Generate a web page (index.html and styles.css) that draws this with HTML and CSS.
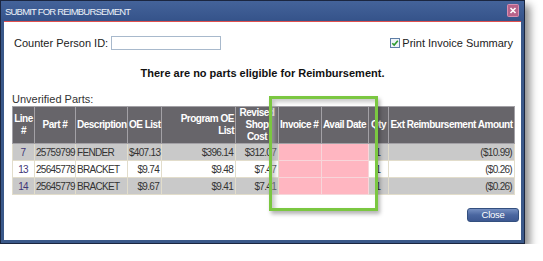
FILE: index.html
```html
<!DOCTYPE html>
<html lang="en">
<head>
  <meta charset="UTF-8" />
  <title>Submit for Reimbursement</title>
  <link rel="stylesheet" href="styles.css">
</head>
<body>
  <div class="dialog">
    <div class="titlebar">
      <span class="title">SUBMIT FOR REIMBURSEMENT</span>
      <span class="close-x">
        <svg width="12" height="13" viewBox="0 0 12 13">
          <rect x="0.5" y="0.5" width="11" height="12" rx="1" fill="#b7628a" stroke="#d98fb0"/>
          <path d="M3.5 4 L8.5 9 M8.5 4 L3.5 9" stroke="#fff" stroke-width="1.6"/>
        </svg>
      </span>
    </div>

    <div class="content">
      <div class="top-row">
        <label class="counter">Counter Person ID: <input type="text" class="counter-input"></label>
        <label class="print">
          <svg width="10" height="10" viewBox="0 0 10 10">
            <rect x="0.5" y="0.5" width="9" height="9" fill="#eef3f9" stroke="#5e7ea6"/>
            <path d="M2.3 5.2 L4.2 7.1 L7.8 2.8" fill="none" stroke="#2c9a2c" stroke-width="1.6"/>
          </svg>
          Print Invoice Summary
        </label>
      </div>

      <p class="notice">There are no parts eligible for Reimbursement.</p>

      <div class="section-label">Unverified Parts:</div>

      <table class="parts">
        <colgroup>
          <col style="width:22px"><col style="width:41px"><col style="width:52px"><col style="width:34px">
          <col style="width:74px"><col style="width:43px"><col style="width:43px"><col style="width:47px">
          <col style="width:20px"><col style="width:126px">
        </colgroup>
        <thead>
          <tr>
            <th>Line<br>#</th>
            <th>Part #</th>
            <th>Description</th>
            <th>OE List</th>
            <th class="right">Program OE<br>List</th>
            <th>Revised<br>Shop<br>Cost</th>
            <th class="left">Invoice #</th>
            <th class="left">Avail Date</th>
            <th>Qty</th>
            <th>Ext Reimbursement Amount</th>
          </tr>
        </thead>
        <tbody>
          <tr class="shade">
            <td class="line">7</td><td>25759799</td><td>FENDER</td><td class="num">$407.13</td>
            <td class="num">$396.14</td><td class="num">$312.07</td><td class="missing"></td><td class="missing"></td>
            <td class="qty">1</td><td class="num">($10.99)</td>
          </tr>
          <tr>
            <td class="line">13</td><td>25645778</td><td>BRACKET</td><td class="num">$9.74</td>
            <td class="num">$9.48</td><td class="num">$7.47</td><td class="missing"></td><td class="missing"></td>
            <td class="qty">1</td><td class="num">($0.26)</td>
          </tr>
          <tr class="shade">
            <td class="line">14</td><td>25645779</td><td>BRACKET</td><td class="num">$9.67</td>
            <td class="num">$9.41</td><td class="num">$7.41</td><td class="missing"></td><td class="missing"></td>
            <td class="qty">1</td><td class="num">($0.26)</td>
          </tr>
        </tbody>
      </table>

      <div class="actions">
        <button type="button" class="btn-close">Close</button>
      </div>
    </div>

    <div class="callout"></div>
  </div>
</body>
</html>
```

FILE: styles.css
```css
* {
  box-sizing: border-box;
  margin: 0;
  padding: 0;
}

body {
  background: #fff;
  font-family: "Liberation Sans", Arial, sans-serif;
  font-size: 11px;
  color: #222;
}

.dialog {
  position: relative;
  width: 525px;
  height: 244px;
  border: 1px solid #1b2640;
  background: #3a5889;
  padding: 0 3px 3px;
  display: flex;
  flex-direction: column;
  box-shadow: 5px 5px 8px rgba(0, 0, 0, 0.45);
}

.titlebar {
  height: 20px;
  display: flex;
  align-items: center;
  justify-content: space-between;
  margin: 0 -3px;
  padding: 0 5px 0 4px;
  background: linear-gradient(#44639a, #35538a);
}

.title {
  font-size: 9.5px;
  letter-spacing: -0.8px;
  color: #eef2f9;
}

.close-x svg {
  display: block;
  margin-top: -1px;
}

.content {
  flex: 1;
  background: #fff;
  border-top: 1px solid #e0504f;
}

.top-row {
  display: flex;
  justify-content: space-between;
  align-items: center;
  padding: 14px 8px 0 10px;
}

.counter {
  display: flex;
  align-items: center;
  gap: 3px;
}

.counter-input {
  width: 110px;
  height: 14px;
  border: 1px solid #a8b9cc;
  background: #fff;
}

.print {
  display: flex;
  align-items: center;
  gap: 2px;
}

.print svg {
  display: block;
}

.notice {
  margin-top: 17px;
  text-align: center;
  font-weight: bold;
  line-height: 13px;
  color: #111;
}

.section-label {
  margin: 13px 0 0 8px;
  line-height: 13px;
  color: #333;
}

/* the grid text is set narrow, like the condensed face of the original */
.parts {
  margin-left: 8px;
  width: 502px;
  table-layout: fixed;
  border-collapse: collapse;
  font-size: 10px;
  letter-spacing: -0.5px;
}

.parts th {
  height: 36px;
  background: #67656a;
  color: #fff;
  font-weight: bold;
  line-height: 12px;
  border: 1px solid #a3a1a6;
  padding: 0 1px;
  text-align: center;
  vertical-align: middle;
  white-space: nowrap;
}

.parts th.right {
  text-align: right;
}

.parts th.left {
  text-align: left;
}

.parts td {
  height: 17px;
  line-height: 15px;
  padding: 0 2px 0 1px;
  border: 1px solid #e2ddcb;
  color: #333;
  letter-spacing: -0.7px;
  white-space: nowrap;
  background: #fff;
}

.parts tr.shade td {
  background: #c9c9c9;
}

.parts td.line {
  text-align: center;
  color: #3e3577;
}

.parts td.num {
  text-align: right;
}

.parts td.qty {
  text-align: center;
}

.parts tr td.missing {
  background: #ffb6c1;
  border-color: #f7d6da;
}

.actions {
  display: flex;
  justify-content: flex-end;
  padding: 13px 2px 0 0;
}

.btn-close {
  width: 52px;
  height: 14px;
  border: 1px solid #34507f;
  border-radius: 3px;
  background: linear-gradient(#7690c2, #4a66a0 50%, #3d5891);
  color: #fff;
  font-family: "Liberation Sans", Arial, sans-serif;
  font-size: 9.5px;
  letter-spacing: -0.3px;
  line-height: 12px;
  cursor: pointer;
}

/* green annotation frame drawn over the table */
.callout {
  position: absolute;
  left: 268px;
  top: 95px;
  width: 109px;
  height: 115px;
  border: 3px solid #7bc741;
  box-shadow: 2px 3px 4px rgba(0, 0, 0, 0.3), inset 3px 3px 4px rgba(170, 170, 170, 0.65);
}
```
